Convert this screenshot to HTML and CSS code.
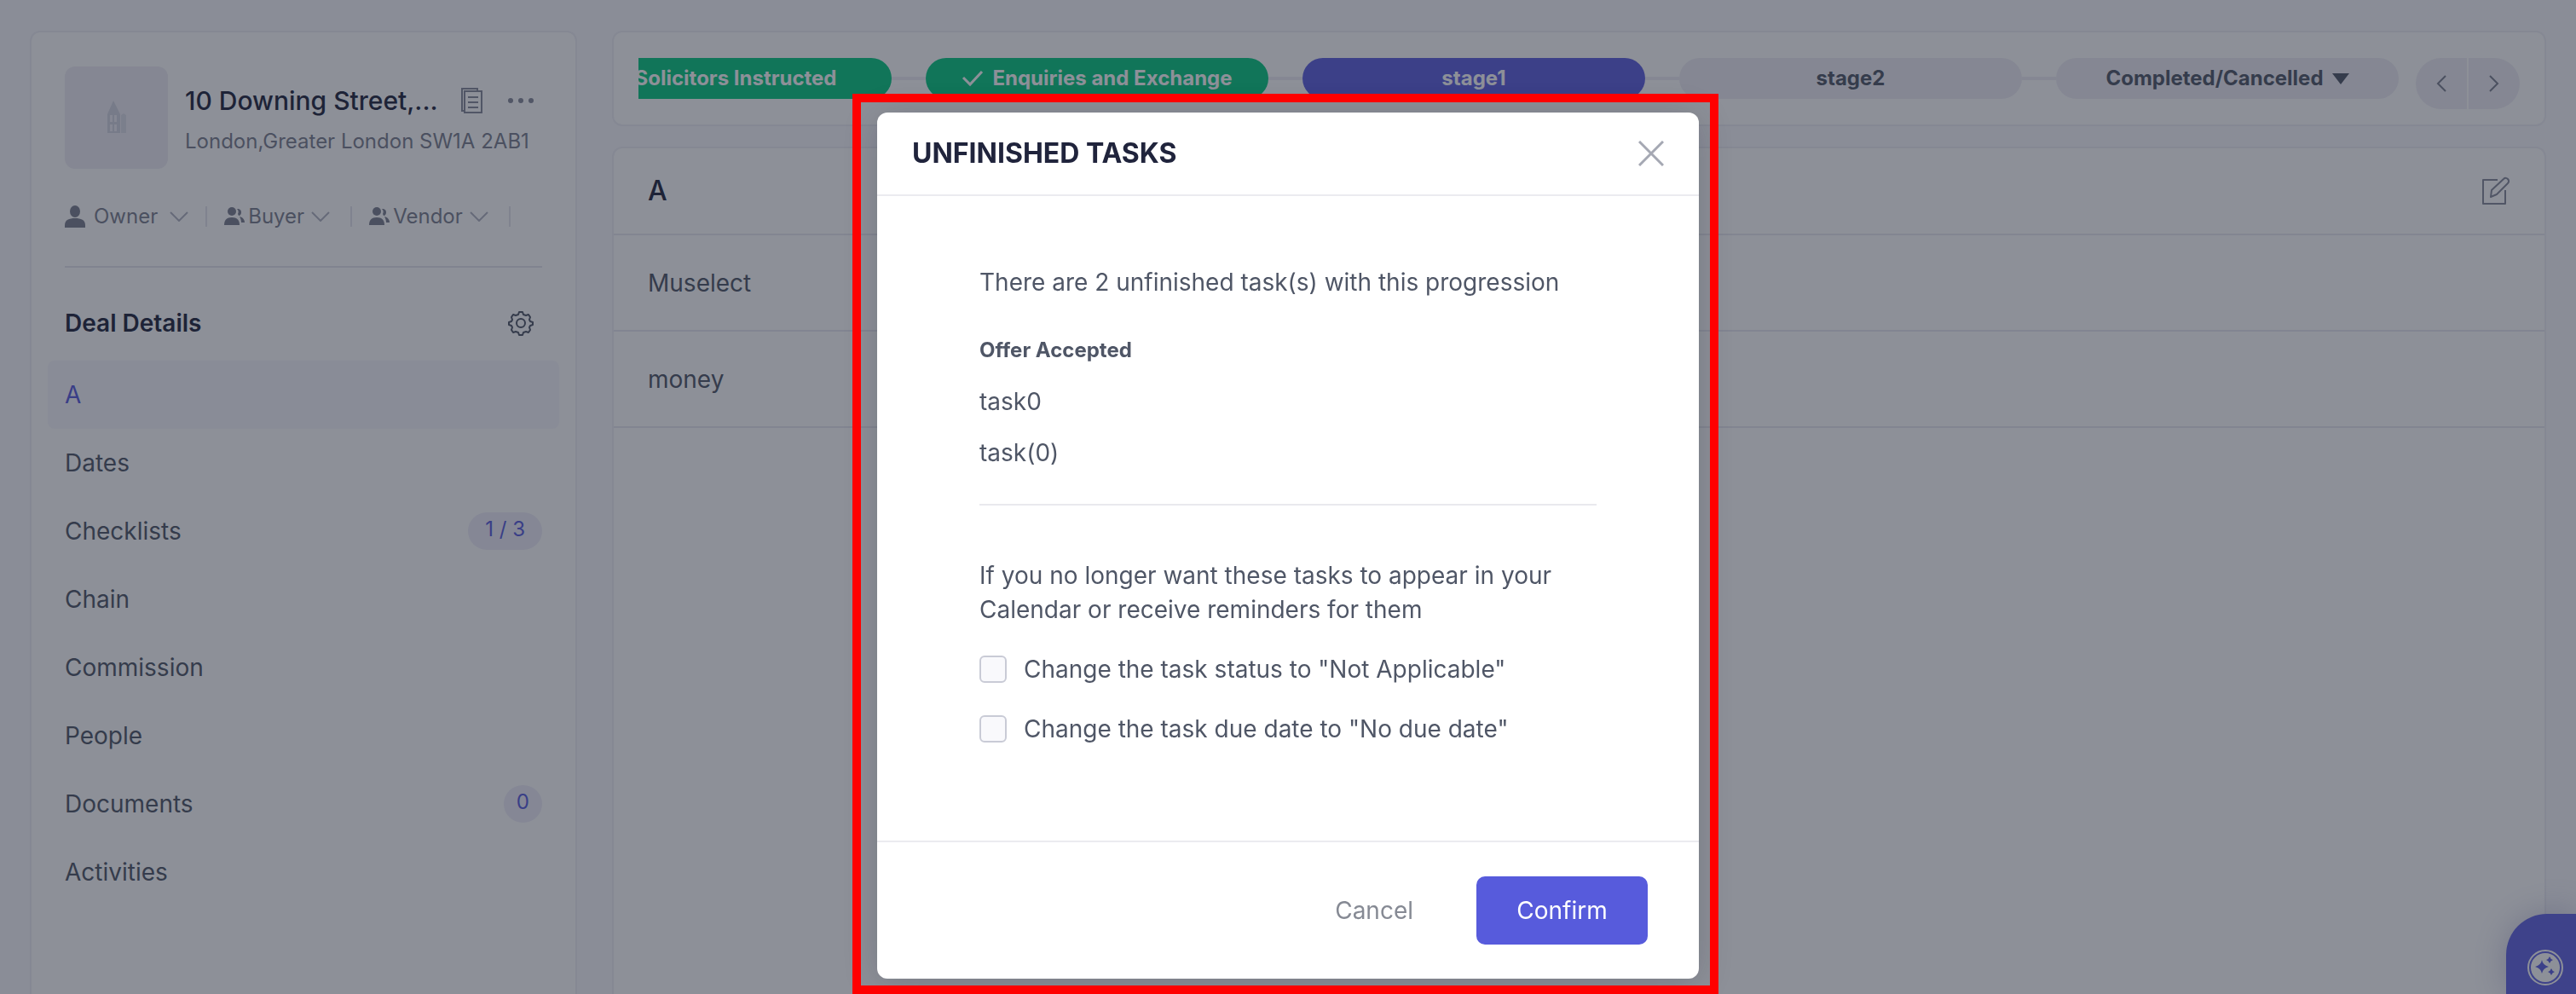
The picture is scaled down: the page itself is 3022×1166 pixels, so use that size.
FILE: index.html
```html
<!DOCTYPE html>
<html lang="en">
  <head>
    <meta charset="UTF-8" />
    <meta name="viewport" content="width=device-width,initial-scale=1.0" />
    <title>Deal Details</title>
    <link rel="stylesheet" href="styles.css">
  </head>
  <body>
    <div class="page">
      <aside class="sidebar">
        <div class="property">
          <div class="photo">
            <svg width="22" height="40" viewBox="0 0 22 40">
              <path fill-rule="evenodd" d="M0 38V16L7 0l8 16v22zM3 17v8h3v-8zm5 0v8h3v-8zM3 28v8h3v-8zm5 0v8h3v-8z"/>
              <path d="M16 38V17l3-2 3 2v21z" opacity="0.7"/>
            </svg>
          </div>
          <div class="address">
            <div class="address-top">
              <h1>10 Downing Street,...</h1>
              <button class="icon-button" aria-label="Copy address">
                <svg width="26" height="30" viewBox="0 0 26 30" fill="none" stroke="currentColor" stroke-width="2">
                  <path d="M4 27H2V1h18v3"/>
                  <rect x="5" y="4" width="20" height="25"/>
                  <path d="M9 11h12M9 17h12M9 23h12"/>
                </svg>
              </button>
              <button class="icon-button" aria-label="More">
                <svg width="30" height="8" viewBox="0 0 30 8" fill="currentColor">
                  <circle cx="3" cy="4" r="3"/><circle cx="15" cy="4" r="3"/><circle cx="27" cy="4" r="3"/>
                </svg>
              </button>
            </div>
            <p>London,Greater London SW1A 2AB1</p>
          </div>
        </div>

        <div class="contacts">
          <button class="contact owner">
            <svg width="24" height="26" viewBox="0 0 24 26" fill="currentColor"><ellipse cx="12" cy="7" rx="6" ry="7"/><path d="M0 26v-3c0-6 5-8 12-8s12 2 12 8v3z"/></svg>
            <span>Owner</span>
            <svg class="chevron" width="22" height="12" viewBox="0 0 22 12"><path d="M1 1l10 10L21 1"/></svg>
          </button>
          <button class="contact">
            <svg width="24" height="22" viewBox="0 0 24 22" fill="currentColor"><circle cx="9" cy="5" r="5"/><path d="M0 21c0-6 3-9 9-9s9 3 9 9zM15 2c4 0 5 2 5 4s-1 4-3 4l-1-2c1-2 1-4-1-6zM18 11c4 1 6 4 6 7h-4c0-3-1-5-2-7z"/></svg>
            <span>Buyer</span>
            <svg class="chevron" width="22" height="12" viewBox="0 0 22 12"><path d="M1 1l10 10L21 1"/></svg>
          </button>
          <button class="contact">
            <svg width="24" height="22" viewBox="0 0 24 22" fill="currentColor"><circle cx="9" cy="5" r="5"/><path d="M0 21c0-6 3-9 9-9s9 3 9 9zM15 2c4 0 5 2 5 4s-1 4-3 4l-1-2c1-2 1-4-1-6zM18 11c4 1 6 4 6 7h-4c0-3-1-5-2-7z"/></svg>
            <span>Vendor</span>
            <svg class="chevron" width="22" height="12" viewBox="0 0 22 12"><path d="M1 1l10 10L21 1"/></svg>
          </button>
        </div>

        <div class="section-title">
          <h2>Deal Details</h2>
          <button class="icon-button dark" aria-label="Settings">
            <svg width="30" height="30" viewBox="0 0 30 30" fill="none" stroke="currentColor" stroke-width="2" stroke-linejoin="round">
              <path d="M13 2h4l1 3 3 1 3-1 2 3-1 3 1 2 3 1v3l-3 1-1 2 1 3-2 3-3-1-3 1-1 3h-4l-1-3-3-1-3 1-2-3 1-3-1-2-3-1v-3l3-1 1-2-1-3 2-3 3 1 3-1z"/>
              <circle cx="15" cy="15" r="5"/>
            </svg>
          </button>
        </div>
        <nav>
          <a class="active" href="#">A</a>
          <a href="#">Dates</a>
          <a href="#">Checklists <span class="badge">1 / 3</span></a>
          <a href="#">Chain</a>
          <a href="#">Commission</a>
          <a href="#">People</a>
          <a href="#">Documents <span class="badge count">0</span></a>
          <a href="#">Activities</a>
        </nav>
      </aside>

      <main>
        <section class="stages">
          <div class="track">
            <button class="stage done">
              <svg width="26" height="20" viewBox="0 0 26 20"><path d="M2 9l8 8L24 2"/></svg>
              Solicitors Instructed
            </button>
            <button class="stage done">
              <svg width="26" height="20" viewBox="0 0 26 20"><path d="M2 9l8 8L24 2"/></svg>
              Enquiries and Exchange
            </button>
            <button class="stage current">stage1</button>
            <button class="stage">stage2</button>
            <button class="stage">Completed/Cancelled
              <svg class="caret" width="20" height="13" viewBox="0 0 20 13"><path d="M0 0h20L10 13z"/></svg>
            </button>
          </div>
          <div class="arrows">
            <button aria-label="Previous"><svg width="12" height="20" viewBox="0 0 12 20"><path d="M11 1L2 10l9 9"/></svg></button>
            <button aria-label="Next"><svg width="12" height="20" viewBox="0 0 12 20"><path d="M1 1l9 9-9 9"/></svg></button>
          </div>
        </section>

        <section class="details">
          <header>
            <h2>A</h2>
            <button class="icon-button" aria-label="Edit">
              <svg width="34" height="34" viewBox="0 0 34 34" fill="none" stroke="currentColor" stroke-width="2" stroke-linejoin="round">
                <path d="M19 4H2v28h26V16"/>
                <path d="M11 24l1-8L26 3c2-2 4-1 5 0s2 3 0 5L18 21z"/>
              </svg>
            </button>
          </header>
          <div class="row">Muselect</div>
          <div class="row">money</div>
        </section>
      </main>

      <button class="assistant" aria-label="Assistant">
        <svg width="44" height="44" viewBox="0 0 44 44">
          <circle cx="22" cy="22" r="20" fill="none" stroke="#fff" stroke-width="2"/>
          <circle cx="22" cy="22" r="17" fill="#fff"/>
          <path fill="#5b5ee0" d="M18 13q1 6 8 8-7 2-8 8-1-6-8-8 7-2 8-8zM27 9q1 3 4 4-3 1-4 4-1-3-4-4 3-1 4-4zM29 23q1 3 4 4-3 1-4 4-1-3-4-4 3-1 4-4z"/>
        </svg>
      </button>
    </div>

    <div class="overlay">
      <form class="modal" role="dialog" aria-labelledby="modal-title">
        <header>
          <h2 id="modal-title">UNFINISHED TASKS</h2>
          <button type="button" class="close" aria-label="Close">
            <svg width="30" height="30" viewBox="0 0 30 30"><path d="M1 1l28 28M29 1L1 29"/></svg>
          </button>
        </header>
        <div class="modal-body">
          <p>There are 2 unfinished task(s) with this progression</p>
          <h3>Offer Accepted</h3>
          <ul>
            <li>task0</li>
            <li>task(0)</li>
          </ul>
          <hr>
          <p>If you no longer want these tasks to appear in your Calendar or receive reminders for them</p>
          <div class="option">
            <input type="checkbox" id="status">
            <label for="status">Change the task status to "Not Applicable"</label>
          </div>
          <div class="option">
            <input type="checkbox" id="due">
            <label for="due">Change the task due date to "No due date"</label>
          </div>
        </div>
        <footer>
          <button type="button" class="cancel">Cancel</button>
          <button type="submit" class="confirm">Confirm</button>
        </footer>
        <div class="highlight"></div>
      </form>
    </div>
  </body>
</html>
```
FILE: styles.css
```css
* {
  box-sizing: border-box;
}
body {
  margin: 0;
  overflow: hidden;
  background: #f8f8fc;
  color: #4f5666;
  font-family: Inter, "Liberation Sans", sans-serif;
  font-size: 28px;
  line-height: 40px;
}
h1, h2, h3, p, ul {
  margin: 0;
  padding: 0;
}
button {
  padding: 0;
  border: 0;
  background: none;
  color: inherit;
  font: inherit;
  cursor: pointer;
}
svg {
  display: block;
  flex: none;
}

.page {
  display: flex;
  gap: 41px;
  height: 100vh;
  padding: 36px 35px 0;
}
.sidebar, .stages, .details {
  border: 2px solid #eeeef4;
  border-radius: 12px;
  background: #fff;
}
.sidebar, .details {
  border-bottom: 0;
  border-radius: 12px 12px 0 0;
}

/* sidebar */
.sidebar {
  flex: none;
  width: 642px;
  padding: 40px 19px 0;
}
.property {
  display: flex;
  gap: 20px;
  padding: 0 20px;
}
.photo {
  display: flex;
  align-items: center;
  justify-content: center;
  flex: none;
  width: 121px;
  height: 120px;
  border-radius: 12px;
  background: #eeedf4;
  fill: #d3d5e0;
}
.address {
  flex: 1;
  padding-top: 20px;
}
.address-top {
  display: flex;
  align-items: center;
}
h1 {
  flex: 1;
  color: #20243c;
  font-size: 30px;
  font-weight: 500;
  line-height: 40px;
  white-space: nowrap;
}
.address-top .icon-button {
  margin-right: 10px;
}
.address-top .icon-button + .icon-button {
  margin-left: 20px;
}
.address p {
  margin-top: 8px;
  color: #7b7f8e;
  font-size: 24px;
  white-space: nowrap;
}
.icon-button {
  color: #868a9a;
}
.dark {
  color: #4f5666;
}
.contacts {
  display: flex;
  align-items: center;
  margin: 36px 20px 0;
  padding-bottom: 38px;
  border-bottom: 2px solid #e4e4ed;
}
.contact {
  display: flex;
  align-items: center;
  gap: 4px;
  height: 40px;
  color: #7b7f8e;
  font-size: 24px;
}
.contact::after {
  content: "";
  width: 2px;
  height: 24px;
  margin: 0 20px;
  background: #e4e4ed;
}
.owner {
  gap: 10px;
}
.owner::after {
  margin: 0 20px 0 10px;
}
.chevron {
  margin-left: 4px;
  fill: none;
  stroke: #b0b3c0;
  stroke-width: 2;
}
.section-title {
  display: flex;
  align-items: center;
  justify-content: space-between;
  height: 109px;
  padding: 20px 30px 0 20px;
}
h2 {
  color: #20243c;
  font-size: 28px;
  font-weight: 600;
}
nav a {
  display: flex;
  align-items: center;
  justify-content: space-between;
  height: 80px;
  padding: 0 20px;
  border-radius: 8px;
  color: #4f5666;
  text-decoration: none;
}
nav .active {
  background: #f7f6fc;
  color: #575bdc;
}
.badge {
  padding: 0 20px 4px;
  border-radius: 22px;
  background: #eeedf8;
  color: #575bdc;
  font-size: 24px;
}
.badge.count {
  padding: 0 15px 4px;
}

/* deal stages */
main {
  display: flex;
  flex: 1;
  flex-direction: column;
  gap: 24px;
  min-width: 0;
}
.stages {
  display: flex;
  gap: 20px;
  padding: 30px 29px 18px;
}
.track {
  display: flex;
  flex: 1;
  justify-content: flex-end;
  gap: 40px;
  overflow: hidden;
}
.stage {
  display: flex;
  position: relative;
  align-items: center;
  justify-content: center;
  flex: none;
  gap: 10px;
  width: 402px;
  height: 48px;
  border-radius: 24px;
  background: #eeedf4;
  font-size: 24px;
  font-weight: 700;
}
/* line joining a stage to the one before it */
.stage + .stage::before {
  content: "";
  position: absolute;
  right: 100%;
  width: 40px;
  height: 4px;
  background: #eeedf4;
}
.stage svg {
  fill: none;
  stroke: #fff;
  stroke-width: 3;
}
.stage .caret {
  fill: #4f5666;
  stroke: none;
}
.done {
  background: #06c981;
  color: #fff;
}
.current {
  background: #5c5edf;
  color: #fff;
}
.arrows {
  display: flex;
  gap: 2px;
}
.arrows button {
  display: flex;
  align-items: center;
  justify-content: center;
  width: 60px;
  height: 60px;
  border-radius: 30px 0 0 30px;
  background: #eeedf4;
}
.arrows button + button {
  border-radius: 0 30px 30px 0;
}
.arrows svg {
  fill: none;
  stroke: #7b7f8e;
  stroke-width: 2;
}

/* details card */
.details {
  flex: 1;
}
.details header, .row {
  display: flex;
  align-items: center;
  justify-content: space-between;
  height: 102px;
  padding: 0 40px;
  border-bottom: 2px solid #e9e9f0;
}
.details h2 {
  font-size: 32px;
  font-weight: 500;
}
.row {
  height: 113px;
}

.assistant {
  display: flex;
  position: absolute;
  right: 0;
  bottom: 0;
  justify-content: center;
  width: 82px;
  height: 94px;
  padding: 41px 0 0 10px;
  border-radius: 48px 0 0 0;
  background: #6063e3;
  box-shadow: 0 0 40px rgba(80, 80, 150, 0.3);
}

/* modal */
.overlay {
  display: flex;
  position: fixed;
  inset: 0;
  align-items: flex-start;
  justify-content: center;
  padding-top: 132px;
  background: rgba(28, 33, 49, 0.5);
}
.modal {
  position: relative;
  width: 964px;
  border-radius: 12px;
  background: #fff;
  box-shadow: 0 4px 40px rgba(28, 33, 49, 0.2);
}
.modal header {
  display: flex;
  align-items: center;
  justify-content: space-between;
  height: 98px;
  padding: 0 41px;
  border-bottom: 2px solid #ebebf0;
}
.modal h2 {
  font-size: 32px;
  font-weight: 700;
}
.close svg {
  fill: none;
  stroke: #a5a8b3;
  stroke-width: 3;
}
.modal-body {
  padding: 81px 120px 111px;
}
h3 {
  margin-top: 40px;
  font-size: 24px;
  font-weight: 700;
}
ul {
  list-style: none;
}
li {
  margin-top: 20px;
}
hr {
  height: 2px;
  margin: 40px 0 62px;
  border: 0;
  background: #e9e9ee;
}
.option {
  display: flex;
  align-items: center;
  gap: 20px;
  margin-top: 30px;
}
input {
  appearance: none;
  width: 32px;
  height: 32px;
  margin: 0;
  border: 2px solid #c9cbd6;
  border-radius: 6px;
  background: #f9f9fc;
}
.modal footer {
  display: flex;
  align-items: center;
  justify-content: flex-end;
  gap: 74px;
  padding: 40px 60px;
  border-top: 2px solid #ebebf0;
}
.cancel {
  color: #868a94;
}
.confirm {
  width: 201px;
  height: 80px;
  border-radius: 10px;
  background: #575bdc;
  color: #fff;
}
.highlight {
  position: absolute;
  inset: -22px -23px -18px -29px;
  border: 10px solid #ff0000;
  pointer-events: none;
}
```
